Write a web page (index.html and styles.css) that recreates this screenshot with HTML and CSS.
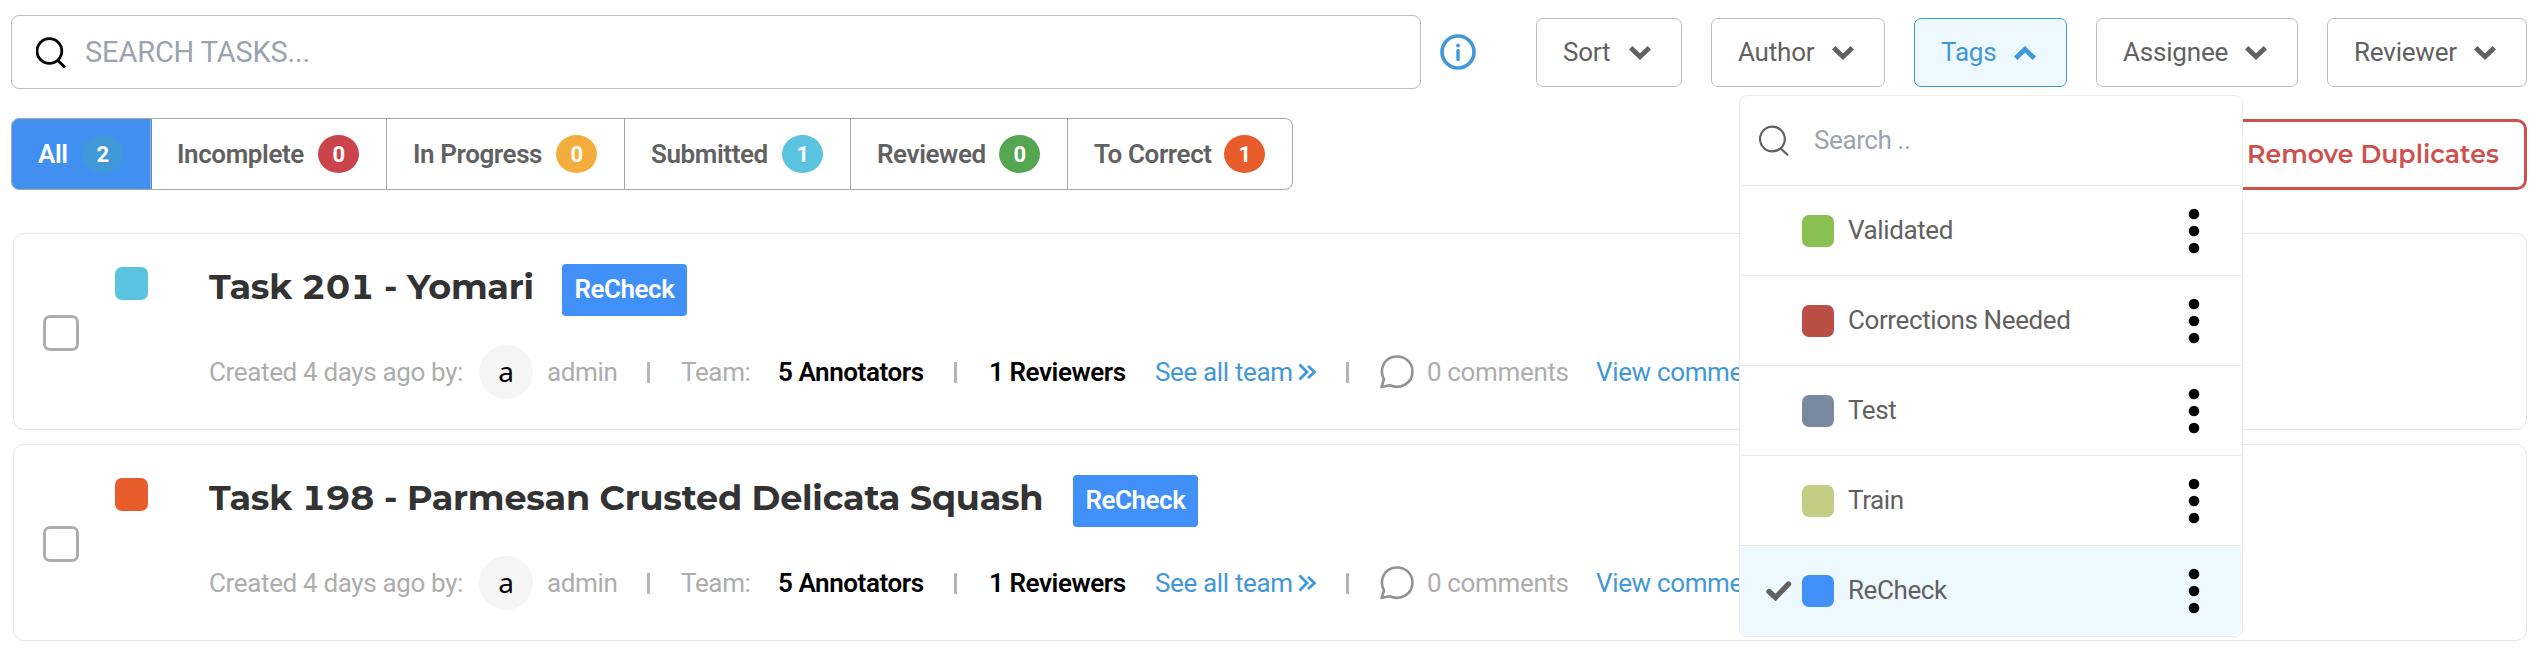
FILE: index.html
```html
<!DOCTYPE html>
<html lang="en">
<head>
<meta charset="utf-8">
<title>Tasks</title>
<link rel="stylesheet" href="styles.css">
</head>
<body>
<svg class="defs" aria-hidden="true">
  <symbol id="search" viewBox="0 0 30 31"><circle cx="13.4" cy="14" r="12.4"/><path d="M21.5 23.2 29 30.3"/></symbol>
  <symbol id="chevron" viewBox="0 0 22 14"><path d="M1.700 1.700 11 10.700 20.300 1.700"/></symbol>
  <symbol id="double" viewBox="0 0 20 18"><path d="M1.5 1.5 9 9 1.5 16.500M10 3 16.500 9 10 15"/></symbol>
  <symbol id="bubble" viewBox="0 0 34 34"><path d="M1.500 32 4 24.500C-1.500 14 4.500 1.500 17 1.500c9 0 15.500 6.500 15.500 15C32.500 28 21 35 9.500 30.300Z"/></symbol>
  <symbol id="dots" viewBox="0 0 12 46"><circle cx="6" cy="6" r="5.300"/><circle cx="6" cy="23" r="5.300"/><circle cx="6" cy="40" r="5.300"/></symbol>
</svg>
<main class="page">
  <header class="toolbar">
    <div class="search-box"><svg class="search-icon"><use href="#search"/></svg><span class="search-text">SEARCH TASKS...</span></div>
    <svg class="info" viewBox="0 0 36 36"><circle class="ring" cx="18" cy="18" r="16"/><circle cx="18" cy="11.500" r="1.900"/><path class="stem" d="M18 16.500V25.500"/></svg>
    <div class="filters">
      <button class="filter sort"><span>Sort</span><svg class="chevron"><use href="#chevron"/></svg></button>
      <button class="filter author"><span>Author</span><svg class="chevron"><use href="#chevron"/></svg></button>
      <div class="dropdown">
        <button class="filter tags"><span>Tags</span><svg class="chevron up"><use href="#chevron"/></svg></button>
        <div class="menu">
          <div class="menu-row menu-search"><svg class="menu-search-icon"><use href="#search"/></svg><span>Search ..</span></div>
          <div class="menu-row"><i class="mark"></i><i class="swatch green"></i><span>Validated</span><svg class="dots"><use href="#dots"/></svg></div>
          <div class="menu-row"><i class="mark"></i><i class="swatch red"></i><span>Corrections Needed</span><svg class="dots"><use href="#dots"/></svg></div>
          <div class="menu-row"><i class="mark"></i><i class="swatch slate"></i><span>Test</span><svg class="dots"><use href="#dots"/></svg></div>
          <div class="menu-row"><i class="mark"></i><i class="swatch olive"></i><span>Train</span><svg class="dots"><use href="#dots"/></svg></div>
          <div class="menu-row selected"><svg class="mark" viewBox="0 0 26 20"><path d="M3 10.500 9.500 16.500 22.500 3"/></svg><i class="swatch blue"></i><span>ReCheck</span><svg class="dots"><use href="#dots"/></svg></div>
        </div>
      </div>
      <button class="filter assignee"><span>Assignee</span><svg class="chevron"><use href="#chevron"/></svg></button>
      <button class="filter reviewer"><span>Reviewer</span><svg class="chevron"><use href="#chevron"/></svg></button>
    </div>
  </header>
  <section class="status-bar">
    <nav class="tabs">
      <div class="tab active">All<b class="badge all">2</b></div>
      <div class="tab">Incomplete<b class="badge incomplete">0</b></div>
      <div class="tab">In Progress<b class="badge progress">0</b></div>
      <div class="tab">Submitted<b class="badge submitted">1</b></div>
      <div class="tab">Reviewed<b class="badge reviewed">0</b></div>
      <div class="tab">To Correct<b class="badge correct">1</b></div>
    </nav>
    <button class="remove">Remove Duplicates</button>
  </section>
  <section class="tasks">
    <article class="card">
      <span class="checkbox"></span><span class="status submitted"></span>
      <div class="body">
        <div class="heading"><h2 class="title first">Task 201 - Yomari</h2><span class="tag">ReCheck</span></div>
        <div class="meta">
          <span>Created 4 days ago by:</span><span class="avatar">a</span><span>admin</span><i class="bar"></i><span>Team:</span><strong>5 Annotators</strong><i class="bar"></i><strong>1 Reviewers</strong><a>See all team<svg class="double"><use href="#double"/></svg></a><i class="bar"></i><svg class="bubble"><use href="#bubble"/></svg><span>0 comments</span><a>View comments</a>
        </div>
      </div>
    </article>
    <article class="card">
      <span class="checkbox"></span><span class="status correct"></span>
      <div class="body">
        <div class="heading"><h2 class="title second">Task 198 - Parmesan Crusted Delicata Squash</h2><span class="tag">ReCheck</span></div>
        <div class="meta">
          <span>Created 4 days ago by:</span><span class="avatar">a</span><span>admin</span><i class="bar"></i><span>Team:</span><strong>5 Annotators</strong><i class="bar"></i><strong>1 Reviewers</strong><a>See all team<svg class="double"><use href="#double"/></svg></a><i class="bar"></i><svg class="bubble"><use href="#bubble"/></svg><span>0 comments</span><a>View comments</a>
        </div>
      </div>
    </article>
  </section>
</main>
</body>
</html>
```

FILE: styles.css
```css
* { box-sizing: border-box; }
body { margin: 0; background: #fff; color: #616161; font: 26px/30px Roboto, sans-serif; overflow: hidden; }
button { font: inherit; color: inherit; background: #fff; padding: 0; }
svg { flex: none; fill: none; stroke: currentColor; }
.defs { position: absolute; width: 0; height: 0; }
.page { width: 2538px; height: 655px; padding: 15px 11px 0; }
.toolbar { display: flex; height: 74px; }
.search-box { width: 1410px; border: 1px solid #bdbdbd; border-radius: 8px; display: flex; align-items: center; padding-left: 24px; }
.search-icon { width: 30px; height: 31px; color: #000; stroke-width: 2.8px; }
.search-text { margin-left: 19px; font-size: 29px; letter-spacing: -0.15px; color: #9ca3af; white-space: nowrap; }
.info { width: 36px; height: 36px; margin: 19px 0 0 19px; color: #4198d8; fill: currentColor; stroke: none; }
.info .ring { fill: none; stroke: currentColor; stroke-width: 3.6; }
.info .stem { stroke: currentColor; stroke-width: 3.4; stroke-linecap: round; }
.filters { display: flex; gap: 29px; margin: 3px 0 0 60px; height: 69px; }
.filter { display: flex; align-items: center; justify-content: space-between; height: 69px; border: 1px solid #bdbdbd; border-radius: 7px; padding: 0 30px 1px 26px; letter-spacing: -0.2px; }
.sort { width: 146px; }
.author { width: 174px; }
.tags { width: 153px; background: #edf8ff; border-color: #4198d8; color: #4198d8; }
.assignee { width: 202px; }
.reviewer { width: 200px; }
.chevron { width: 22px; height: 14px; margin-top: 1px; overflow: visible; stroke-width: 4.8px; }
.up { transform: rotate(180deg); }
.dropdown { position: relative; }
.menu { position: absolute; z-index: 2; top: 77px; left: -175px; width: 504px; height: 542px; background: #fff; border: 1px solid #ececec; border-radius: 8px; padding: 0 1px 1px; letter-spacing: -0.4px; }
.menu-row { display: flex; align-items: center; height: 90px; border-bottom: 1px solid #e9e9e9; padding-left: 25px; }
.menu-row span { padding-bottom: 2px; }
.menu-search { padding-left: 18px; color: #9ca3af; }
.menu-search span { margin-left: 25px; }
.menu-search-icon { width: 30px; height: 31px; color: #616161; stroke-width: 2.2px; }
.selected { height: 88px; margin-top: 1px; border: 0; border-radius: 0 0 7px 7px; background: #edf8ff; }
.mark { width: 26px; height: 20px; stroke-width: 5.4px; stroke-linecap: round; }
.swatch { width: 32px; height: 32px; border-radius: 7px; margin: 0 14px 0 10px; }
.green { background: #8abf51; }
.red { background: #b94e45; }
.slate { background: #7889a0; }
.olive { background: #c3cd84; }
.blue { background: #4190f7; }
.dots { width: 12px; height: 46px; margin: 0 41px 0 auto; fill: #000; stroke: none; }
.status-bar { display: flex; justify-content: space-between; margin-top: 29px; height: 72px; }
.tabs { display: grid; grid-template-columns: 139px 236px 238px 226px 217px 224px; border: 1px solid #a8a8a8; border-radius: 8px; overflow: hidden; width: 1282px; font-weight: 600; letter-spacing: -0.4px; }
.tab { display: flex; align-items: center; justify-content: space-between; padding: 0 27px 1px 26px; border-right: 1px solid #a8a8a8; white-space: nowrap; }
.tab:last-child { border: 0; }
.active { background: #4190f1; color: #fff; box-shadow: 0 0 0 1px #4190f1; }
.badge { width: 41px; height: 38px; border-radius: 50%; color: #fff; font-size: 22px; line-height: 39px; font-weight: 700; text-align: center; }
.all { background: #4198d8; }
.incomplete { background: #cb444b; }
.progress { background: #f3ad3d; }
.submitted { background: #5ac3e0; }
.reviewed { background: #54a651; }
.correct { background: #e85b2a; }
.remove { height: 71px; width: 400px; margin: 1px 0 0; border: 3px solid #cd524e; border-radius: 10px; color: #cd524e; font: 600 25.2px/30px Montserrat, Inter, sans-serif; text-align: right; padding: 0 25px 1px 0; }
.tasks { display: grid; gap: 14px; margin: 43px 0 0 2px; }
.card { display: flex; width: 2514px; height: 197px; border: 1px solid #e6e6e6; border-radius: 11px; padding-left: 29px; }
.checkbox { width: 36px; height: 36px; margin-top: 81px; border: 3px solid #adadad; border-radius: 7px; }
.status { width: 33px; height: 33px; margin: 33px 61px 0 36px; border-radius: 7px; }
.body { padding-top: 30px; }
.heading { display: flex; height: 52px; }
.title { margin: 2px 0 0; color: #333; font: 700 35px/42px Montserrat, Inter, sans-serif; font-variant-numeric: tabular-nums; letter-spacing: -0.24px; white-space: nowrap; }
.first { width: 353px; }
.second { width: 864px; }
.tag { width: 125px; height: 52px; background: #4190f7; color: #fff; border-radius: 4px; font-weight: 600; letter-spacing: -0.5px; line-height: 50px; text-align: center; }
.meta { display: grid; grid-template-columns: 270px 68px 100px 34px 97px 176px 35px 166px 191px 34px 47px 169px 220px; align-items: center; height: 54px; margin-top: 29px; color: #adadad; letter-spacing: -0.35px; white-space: nowrap; }
.meta strong { color: #000; font-weight: 600; letter-spacing: -0.42px; }
.meta a { color: #4198d8; }
.avatar { width: 54px; height: 54px; border-radius: 50%; background: #f5f5f5; color: #000; font: 28px/52px "Noto Sans", sans-serif; text-align: center; }
.bar { width: 3px; height: 21px; background: #b5b5b5; }
.double { width: 20px; height: 18px; margin-left: 5px; stroke-width: 2.8px; }
.bubble { width: 34px; height: 34px; color: #929292; stroke-width: 2.6px; stroke-linejoin: round; }
```
